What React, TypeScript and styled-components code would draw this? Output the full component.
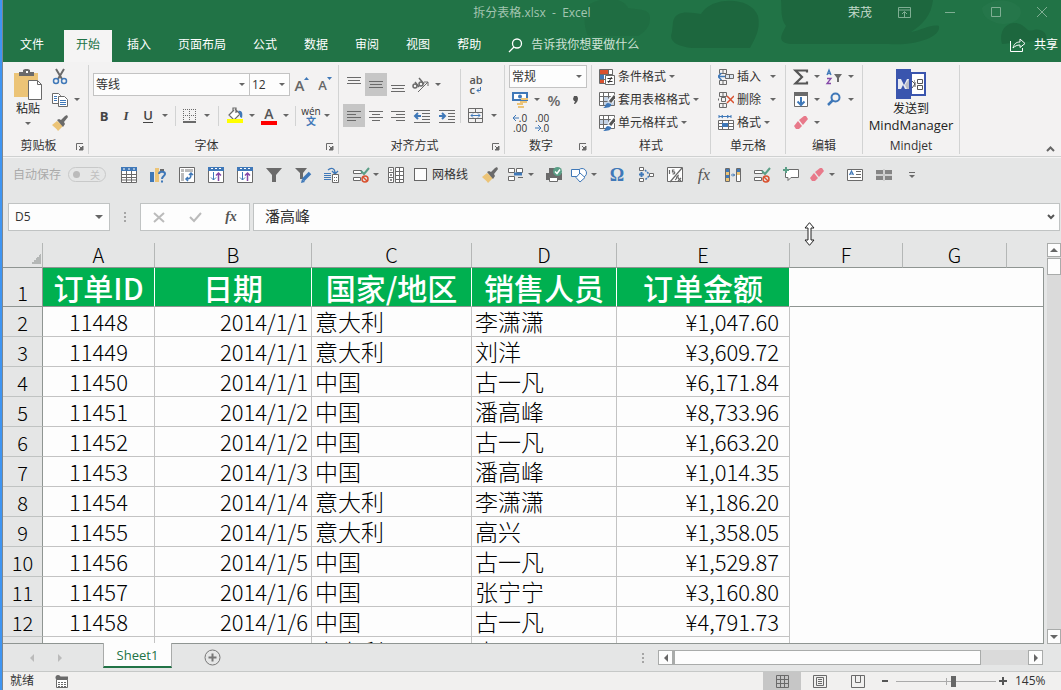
import React from 'react';
import styled, { createGlobalStyle, css } from 'styled-components';

const UI = '"Open Sans", "Noto Sans CJK SC", sans-serif';
const CELL = '"Noto Sans CJK SC", sans-serif';
const GREEN = '#217346';
const GREY = '#6a6a6a';
const BLUE = '#3f78b8';
const PURPLE = '#8548a8';
const TAN = '#ecc477';
const PINK = '#e8798a';
const RED = '#d9512f';

const Global = createGlobalStyle`
  *, *::before, *::after { box-sizing: border-box; }
  body { margin: 0; font: 12px/16px ${UI}; color: #333; }
  button, input, select { font: inherit; color: inherit; margin: 0; }
`;

const Window = styled.div`
  position: relative;
  height: 100vh;
  min-height: 420px;
  display: flex;
  flex-direction: column;
  overflow: hidden;
  padding-left: 1px;
  background: #e5e6e6;
  border-left: 2px solid #3f95f2;
  box-shadow: inset 1px 0 0 #7d8790;
`;

/* ---------- shared controls ---------- */

const bare = css`
  appearance: none;
  border: 0;
  padding: 0;
  background: none;
`;

const Tool = styled.button<{ $w?: number; $on?: boolean; $h?: number }>`
  ${bare}
  flex: none;
  display: flex;
  align-items: center;
  justify-content: center;
  width: ${(p) => p.$w ?? 22}px;
  height: ${(p) => p.$h ?? 23}px;
  background: ${(p) => (p.$on ? '#c6c6c6' : 'transparent')};
  svg { display: block; overflow: visible; }
`;

const CaretSvg = styled.svg`
  flex: none;
  display: block;
  width: 6px;
  height: 3px;
  fill: #666;
`;
const Caret = () => (
  <CaretSvg viewBox="0 0 6 3" aria-hidden="true"><path d="M0 0h6L3 3z" /></CaretSvg>
);

const Drop = ({ w = 12, label }: { w?: number; label: string }) => (
  <Tool $w={w} aria-label={label}><Caret /></Tool>
);

const Field = styled.div<{ $w: number; $join?: boolean }>`
  position: relative;
  flex: none;
  width: ${(p) => p.$w}px;
  height: 23px;
  border: 1px solid #c3c3c3;
  margin-left: ${(p) => (p.$join ? '-1px' : '0')};
  background: #fdfdfd;
  select {
    ${bare}
    width: 100%;
    height: 100%;
    padding-left: 2px;
    outline: 0;
  }
  svg { position: absolute; right: 4px; top: 9px; pointer-events: none; }
`;
const Combo = ({ w, value, label, join }: { w: number; value: string; label: string; join?: boolean }) => (
  <Field $w={w} $join={join}>
    <select aria-label={label} defaultValue={value}><option>{value}</option></select>
    <Caret />
  </Field>
);

/* ---------- icons ---------- */

const Svg = ({ w = 16, h = 16, children }: { w?: number; h?: number; children: React.ReactNode }) => (
  <svg width={w} height={h} viewBox={`0 0 ${w} ${h}`} fill="none" stroke={GREY} aria-hidden="true">{children}</svg>
);

const Lines = ({ xs, ys }: { xs: [number, number][]; ys: number[] }) => (
  <>{ys.map((y, i) => <path key={y} d={`M${xs[i][0]} ${y}.5H${xs[i][1]}`} />)}</>
);

const Brush = () => (
  <Svg>
    <path d="M0 10l5-4 6 5-5 5c-1-2-4-4-6-6z" fill={TAN} stroke="none" />
    <path d="M5 5l2-1 2 1 4-4 2-1 1 2-4 5 1 2-2 3z" fill={GREY} stroke="none" />
  </Svg>
);
const Eraser = () => (
  <Svg>
    <path d="M6 5l5-4h2l2 3-5 6z" fill={PINK} stroke="none" />
    <path d="M5 6l4 5-3 3H3L1 11z" fill={PINK} stroke="none" />
  </Svg>
);
const Sorter = () => (
  <Svg>
    <path d="M.5 1.5h15v14H.5z" fill="#fff" />
    <path d="M0 0h16v4H0z" fill={BLUE} stroke="none" />
    <path d="M3 1.5h2M7 1.5h2M11 1.5h2" stroke="#fff" />
    <path d="M5.500 5v8M3 10.500l2.500 2.500L8 10.500" stroke={BLUE} />
    <path d="M10.500 14V6M8 8.500L10.500 6 13 8.500" stroke={PURPLE} strokeWidth="1.500" />
  </Svg>
);
const Validate = () => (
  <Svg>
    <path d="M.5 3.500h8v3h-8zM.5 10.500h7v3h-7z" fill="#fff" />
    <path d="M8 4l3 3 5-6" stroke="#5a9e86" strokeWidth="2" />
    <circle cx="12" cy="12" r="3" stroke={RED} strokeWidth="1.500" />
    <path d="M10 10l4 4" stroke={RED} strokeWidth="1.500" />
  </Svg>
);
const StyleIcon = ({ filled }: { filled?: boolean }) => (
  <Svg>
    <path d="M.5 .5h15v13H.5z" fill="#fff" />
    <path d={filled ? 'M1 4h11v6H1z' : 'M5 5h10v8H5z'} fill="#c4d3e6" stroke="none" />
    <path d="M.5 4.500h15M.5 9.500h8M4.500 .5v13M9.500 .5v6" />
    <path d="M16 3l-5 7" stroke="#fff" strokeWidth="5" />
    <path d="M16 4l-5 6" stroke="#555" strokeWidth="3" />
    <path d="M4 16c3-1 2-5 5-5l3 1c1 3-3 4-8 4z" fill={BLUE} stroke="none" />
  </Svg>
);
const CellsIcon = ({ kind }: { kind: 'insert' | 'delete' }) => (
  <Svg>
    <path d="M1.500 .5h7v4h-7zM5 .5v4M1.500 11.500h7v4h-7zM5 11.500v4" />
    {kind === 'insert' ? (
      <>
        <path d="M7.500 5.500h8v4h-8zM11.500 5.500v4" fill="#dbe5f1" />
        <path d="M0 7.500h7M3.500 4L0 7.500 3.500 11" stroke={BLUE} strokeWidth="1.500" />
      </>
    ) : (
      <>
        <path d="M.5 8.500v-2M3.500 5.500h4v4h-4z" />
        <path d="M9 4l7 7M16 4l-7 7" stroke={RED} strokeWidth="1.500" />
      </>
    )}
  </Svg>
);

const I = {
  paste: (
    <Svg w={28} h={32}>
      <path d="M0 4h24v24H0z" fill={TAN} stroke="none" />
      <path d="M5 7V3h4V1l2-1h3l2 1v2h4v4z" fill={GREY} stroke="none" />
      <path d="M12 2h2v2h-2z" fill="#fff" stroke="none" />
      <path d="M14.500 11.500h9l4 4v15h-13z" fill="#fff" />
      <path d="M23.500 11.500v4h4" />
    </Svg>
  ),
  cut: (
    <Svg>
      <path d="M4 0l6 10M12 0L6 10" strokeWidth="2" />
      <circle cx="4" cy="12" r="2.500" stroke={BLUE} strokeWidth="1.500" />
      <circle cx="12" cy="12" r="2.500" stroke={BLUE} strokeWidth="1.500" />
    </Svg>
  ),
  copy: (
    <Svg>
      <path d="M.5 1.500h6l2 2v8h-8z" fill="#fff" />
      <path d="M2 4.500h3M2 6.500h3M2 8.500h3" stroke={BLUE} />
      <path d="M6.500 4.500h6l3 3v7h-9z" fill="#fff" />
      <path d="M8 8.500h6M8 10.500h6M8 12.500h6" stroke={BLUE} />
    </Svg>
  ),
  border: (
    <Svg w={14} h={14}>
      <path d="M.5 0v13M6.500 0v13M12.500 0v13M0 .5h13M0 6.500h13" strokeDasharray="1 1" />
      <path d="M0 13h13" strokeWidth="2" />
    </Svg>
  ),
  fill: (
    <Svg w={17} h={17}>
      <path d="M7 3L2 8l5 5 6-6-5-5M6 5V1h3v5" fill="#fff" strokeWidth="1.200" />
      <path d="M11 4c4-1 5 2 4 7l-2-1V7z" fill={BLUE} stroke="none" />
      <path d="M0 12h16v4H0z" fill="#ff0" stroke="none" />
    </Svg>
  ),
  angle: (
    <Svg w={18}>
      <circle cx="3" cy="9" r="2" strokeWidth="1.500" />
      <path d="M3 5l4 5M7 1l5 6" strokeWidth="1.500" />
      <circle cx="9" cy="7" r="2" strokeWidth="1.500" />
      <path d="M6 15L16 5M12 5h4v4" />
    </Svg>
  ),
  outdent: (
    <Svg w={18} h={14}>
      <Lines ys={[1, 4, 7, 10, 13]} xs={[[0, 16], [8, 16], [8, 16], [8, 16], [0, 16]]} />
      <path d="M1 7h6M4 4L1 7l3 3" stroke={BLUE} strokeWidth="2" />
    </Svg>
  ),
  indent: (
    <Svg w={18} h={14}>
      <Lines ys={[1, 4, 7, 10, 13]} xs={[[0, 16], [9, 16], [9, 16], [9, 16], [0, 16]]} />
      <path d="M0 7h6M3 4l3 3-3 3" stroke={BLUE} strokeWidth="2" />
    </Svg>
  ),
  merge: (
    <Svg>
      <path d="M.5 .5h14v14H.5zM.5 4.500h14M.5 10.500h14M7.500 .5v4M7.500 10.500v4" />
      <path d="M3 7.500h9M5 5.500l-2 2 2 2M10 5.500l2 2-2 2" stroke={BLUE} />
    </Svg>
  ),
  money: (
    <Svg w={17}>
      <path d="M1 1h14v7H1z" stroke={BLUE} strokeWidth="2" fill="#fff" />
      <circle cx="8" cy="4.500" r="2" fill={BLUE} stroke="none" />
      <path d="M9 6h7v2H9zM8 9h7v2H8zM5 11h6v2H5zM6 14h6v2H6z" fill={TAN} stroke="none" />
    </Svg>
  ),
  comma: (
    <Svg w={6} h={8}><path d="M1 0h3l1 2c0 3-1 4-3 6H1l1-3H1L0 3z" fill="#555" stroke="none" /></Svg>
  ),
  cond: (
    <Svg>
      <path d="M.5 .5h13v14H.5z" fill="#fff" />
      <path d="M1 1h8v4H1z" fill={RED} stroke="none" />
      <path d="M1 6h4v4H1z" fill={BLUE} stroke="none" />
      <path d="M1 11h4v3H1z" fill={RED} stroke="none" />
      <path d="M.5 5.500h13M.5 10.500h6M9.500 .5v5" />
      <path d="M6.500 6.500h9v9h-9z" fill="#fff" />
      <path d="M8.500 9.500h5M8.500 12.500h5M12.500 8l-3 6" stroke="#333" />
    </Svg>
  ),
  format: (
    <Svg>
      <path d="M1 0v3M13 0v3M1 1.500h12M5 0L3 1.500 5 3M9 0l2 1.500L9 3" stroke={BLUE} />
      <path d="M.5 5.500h15v9H.5zM.5 8.500h15M.5 11.500h15M4.500 5.500v9M10.500 5.500v9" fill="#fff" />
      <path d="M4 8h6v4H4z" fill={BLUE} stroke="none" />
    </Svg>
  ),
  sum: (
    <Svg>
      <path d="M14 3.500V1.500H2.500L9 8l-6.500 6.500H14v-2" strokeWidth="2.200" stroke="#555" />
    </Svg>
  ),
  filldown: (
    <Svg w={14}>
      <path d="M.5 .5h13v14H.5z" fill="#fff" />
      <path d="M0 0h14v4H0z" fill={GREY} stroke="none" />
      <path d="M7 5v8M3.500 9.500L7 13l3.500-3.500" stroke={BLUE} strokeWidth="2" />
    </Svg>
  ),
  find: (
    <Svg>
      <circle cx="9.500" cy="5.500" r="4" stroke={BLUE} strokeWidth="2" />
      <path d="M6.500 8.500L2 13" stroke={BLUE} strokeWidth="2.500" />
    </Svg>
  ),
  sheet: (
    <Svg>
      <path d="M.5 .5h15v15H.5zM.5 7.500h15M.5 10.500h15M.5 13h15M5.500 4v12M10.500 4v12" fill="#fff" />
      <path d="M0 0h16v4H0z" fill={BLUE} stroke="none" />
      <path d="M2 2h2M7 2h2M12 2h2" stroke="#fff" />
    </Svg>
  ),
  chartHelp: (
    <Svg>
      <path d="M0 5h4v10H0z" fill={BLUE} stroke="none" />
      <path d="M5 1h4v14H5z" fill={TAN} stroke="none" />
      <path d="M10 3h4" strokeWidth="2" />
      <path d="M9 7c0-3 6-3 6 0 0 2-3 2-3 5M12 13.500v2" stroke={BLUE} strokeWidth="2" />
    </Svg>
  ),
  pivot: (
    <Svg>
      <path d="M.5 .5h15v15H.5z" fill="#fff" />
      <path d="M2 2h3v3H2zM6 2h8v3H6zM2 6h3v8H2z" fill="#bbb" stroke="none" />
      <path d="M7 12c4 0 5-1 5-5M9 10l-2 2 2 2M10 8l2-2 2 2" stroke={BLUE} strokeWidth="1.500" />
    </Svg>
  ),
  filter: <Svg><path d="M0 1h16l-6 7v7H6V8z" fill={GREY} stroke="none" /></Svg>,
  filterEdit: (
    <Svg>
      <path d="M0 1h12L8 6v6H5V6z" fill={GREY} stroke="none" />
      <path d="M15 6l-7 7" stroke={BLUE} strokeWidth="3.500" />
      <path d="M6 16l1-4 3 3z" fill={BLUE} stroke="none" />
    </Svg>
  ),
  linkCells: (
    <Svg>
      <path d="M4 3c3-3 7-2 7 3M8 4l3 3 3-3" stroke={BLUE} strokeWidth="1.300" />
      <path d="M0 6.500h7M0 8.500h7M0 10.500h7M0 12.500h7" stroke={BLUE} />
      <path d="M8.500 7.500h6v8h-6z" fill="#fff" />
      <path d="M10 10.500h3M10 13.500h3" strokeDasharray="1 1" />
    </Svg>
  ),
  outline: (
    <Svg>
      <path d="M.5 .5h5v5h-5zM.5 5.500h5v5h-5zM.5 10.500h5v5h-5zM7.500 .5h8v15h-8zM7.500 4.500h8M7.500 8.500h8M7.500 12.500h8M11.500 .5v15" fill="#fff" />
      <path d="M2 3h2M2 8h2M3 7v2M2 13h2M3 12v2" />
    </Svg>
  ),
  shapesGroup: (
    <Svg>
      <path d="M.5 1.500h6v4h-6zM8.500 1.500h6v4h-6zM.5 9.500h6v4h-6z" fill="#fff" />
      <path d="M6 7h8" stroke={BLUE} strokeWidth="3" />
      <path d="M10 10.500h5" />
    </Svg>
  ),
  print: (
    <Svg>
      <path d="M3 1h6v5H3zM0 6h16v7H0z" fill={GREY} stroke="none" />
      <path d="M3.500 10.500h8v4h-8z" fill="#fff" />
      <circle cx="11.500" cy="4.500" r="4.500" fill="#5a9e86" stroke="none" />
      <path d="M9 4.500l2 2 3-4" stroke="#fff" strokeWidth="1.500" />
    </Svg>
  ),
  shapes: (
    <Svg>
      <circle cx="11" cy="6" r="4.500" stroke={BLUE} fill="#fff" />
      <path d="M.5 2.500h8v7h-8z" stroke={BLUE} fill="#fff" />
      <path d="M9 6l5 4.500L9 15l-4-4.500z" stroke={BLUE} fill="#fff" />
    </Svg>
  ),
  flow: (
    <Svg>
      <path d="M1.500 .5h4v3h-4zM1.500 11.500h4v3h-4zM11.500 6.500h4v3h-4z" fill="#fff" />
      <path d="M3.500 5v5M1 7.500h5" stroke={BLUE} strokeWidth="2" />
      <path d="M7 3l4 4M11 9l-4 4" stroke={BLUE} strokeDasharray="2 1" strokeWidth="1.500" />
    </Svg>
  ),
  percentBox: (
    <Svg>
      <path d="M.5 .5h15v14H.5z" fill="#fff" />
      <path d="M2.500 3v4M7.500 3h-2v2c3-1 3 2 0 2M15 1L3 15M8 13c3-1 1-5 4-5M9 10h3M11 11l3 3M14 11l-3 3" strokeWidth="1.200" />
    </Svg>
  ),
  splitCols: (
    <Svg>
      <path d="M.5 1.500h4v13h-4zM11.500 1.500h4v13h-4z" fill="#fff" strokeWidth="1" />
      <path d="M1 5h3v3H1zM12 5h3v3h-3z" fill={TAN} stroke="none" />
      <path d="M1 2h3v3H1zM1 8h3v3H1zM12 2h3v3h-3z" fill={BLUE} stroke="none" />
      <path d="M1 11h3v3H1z" fill={TAN} stroke="none" />
      <path d="M6 8h4M8 6.500L9.500 8 8 9.500" stroke={BLUE} />
    </Svg>
  ),
  comment: (
    <Svg>
      <path d="M6 2.500h9.500v8H8l-3 3v-3H2.500V6" fill="#fff" />
      <path d="M0 3h6M3 0v6" stroke="#5a9e86" strokeWidth="2" />
    </Svg>
  ),
  textbox: (
    <Svg>
      <path d="M.5 2.500h15v11H.5z" fill="#fff" />
      <path d="M2.500 8l2-4 2 4M3.500 7h2" stroke={BLUE} strokeWidth="1.200" />
      <path d="M9 4.500h5M9 7.500h5M3 10.500h11" />
    </Svg>
  ),
  freeze: (
    <Svg>
      <path d="M0 3h7v4H0zM9 3h7v4H9zM0 9h7v4H0zM9 9h7v4H9z" fill="#858585" stroke="none" />
      <path d="M0 8h16M8 2v12" stroke="#bbb" />
    </Svg>
  ),
  more: (
    <Svg w={8} h={8}><path d="M0 1.500h6" /><path d="M0 4h6L3 7z" fill={GREY} stroke="none" /></Svg>
  ),
};

const Mindjet = () => (
  <Svg w={30} h={32}>
    <path d="M15 4h14v22H15z" fill="#fff" stroke="#3a55ae" strokeWidth="2" />
    <path d="M0 0h15v30H0z" fill="#3a55ae" stroke="none" />
    <path d="M2 10l5 5-5 5z" fill="#fff" stroke="none" />
    <path d="M2 10v10h3l2-4 2 4h4V10h-2l-3 6-3-6z" fill="#e6e9f2" stroke="none" />
    <path d="M9 16l4-6v10h-2z" fill="#b9bcc6" stroke="none" />
    <path d="M16 12l3 3-3 4M18 12h1M21.500 10.500h5v4h-5zM21.500 16.500h5v4h-5zM19 13v5" stroke="#555" />
  </Svg>
);

/* ---------- title bar and ribbon tabs ---------- */

const Header = styled.header`
  position: relative;
  flex: none;
  background: ${GREEN};
  color: #e9f2ec;
`;
const Pattern = styled.svg`
  position: absolute;
  top: 0;
  right: 0;
  width: 501px;
  height: 48px;
`;
const TitleBar = styled.div`
  position: relative;
  display: grid;
  grid-template-columns: 1fr auto 1fr;
  align-items: center;
  height: 30px;
`;
const Title = styled.h1`
  grid-column: 2;
  margin: 0;
  padding-bottom: 4px;
  font-size: 12px;
  font-weight: 400;
  white-space: pre;
  color: #a3c5b1;
`;
const WindowTools = styled.div`
  display: flex;
  justify-content: flex-end;
  align-items: center;
  gap: 30px;
  padding: 0 11px 5px 0;
  color: #c3dacb;
`;
const User = styled.span`
  margin-right: -6px;
`;
const TabRow = styled.nav`
  position: relative;
  display: flex;
  align-items: center;
  gap: 3px;
  height: 32px;
  padding: 0 3px 0 5px;
`;
const Tab = styled.button<{ $active?: boolean; $first?: boolean }>`
  ${bare}
  height: 32px;
  padding: 0 12px 2px;
  margin-right: ${(p) => (p.$first ? '5px' : '0')};
  background: ${(p) => (p.$active ? '#f5f4f4' : 'transparent')};
  color: ${(p) => (p.$active ? GREEN : '#fff')};
`;
const HeaderLink = styled.button<{ $end?: boolean }>`
  ${bare}
  display: flex;
  align-items: center;
  gap: 8px;
  margin-left: ${(p) => (p.$end ? 'auto' : '12px')};
  padding-bottom: 2px;
  color: ${(p) => (p.$end ? '#fff' : '#cfe2d6')};
`;

/* ---------- ribbon ---------- */

const Ribbon = styled.section`
  position: relative;
  flex: none;
  display: flex;
  height: 95px;
  padding: 3px 0 2px;
  background: #f3f2f2;
  border-bottom: 1px solid #cfd1d1;
`;
const Group = styled.div<{ $w: number; $pad?: number }>`
  flex: none;
  display: flex;
  flex-direction: column;
  justify-content: space-between;
  width: ${(p) => p.$w}px;
  padding-left: ${(p) => p.$pad ?? 5}px;
  border-right: 1px solid #d2d3d3;
`;
const GroupFoot = styled.div<{ $pad?: number }>`
  position: relative;
  margin-left: -${(p) => p.$pad ?? 5}px;
  padding-right: 14px;
  height: 16px;
  text-align: center;
  color: #333;
  button { position: absolute; right: 4px; top: 5px; }
`;
const Plain = styled(GroupFoot)`
  padding-right: 0;
`;
const Row = styled.div<{ $top?: boolean; $indent?: boolean }>`
  display: flex;
  align-items: ${(p) => (p.$top ? 'flex-start' : 'center')};
  padding-left: ${(p) => (p.$indent ? '15px' : '0')};
`;
const TwoRows = styled.div`
  display: flex;
  flex-direction: column;
  gap: 8px;
  padding-top: 8px;
`;
const ThreeRows = styled.div`
  display: grid;
  grid-template-rows: repeat(3, 23px);
`;
const Sep = styled.i<{ $h?: number; $m?: number }>`
  flex: none;
  width: 1px;
  height: ${(p) => p.$h ?? 20}px;
  margin: 0 ${(p) => p.$m ?? 4}px;
  background: #d2d3d3;
`;
const Big = styled.button<{ $w: number }>`
  ${bare}
  flex: none;
  display: flex;
  flex-direction: column;
  align-items: center;
  width: ${(p) => p.$w}px;
  padding-top: 4px;
  color: #222;
  span + svg { margin-top: 5px; }
`;
const BigText = styled.span<{ $size?: number }>`
  font-size: ${(p) => p.$size ?? 12}px;
  line-height: 16px;
`;
const Letter = styled.span<{ $kind?: 'b' | 'i' | 'u' }>`
  font-size: 13px;
  line-height: 14px;
  color: #444;
  font-weight: ${(p) => (p.$kind === 'b' ? 700 : 600)};
  font-style: ${(p) => (p.$kind === 'i' ? 'italic' : 'normal')};
  font-family: ${(p) => (p.$kind === 'i' ? '"Liberation Serif", serif' : UI)};
  border-bottom: ${(p) => (p.$kind === 'u' ? '1px solid #444' : '0')};
`;
const SizeLetter = styled.span<{ $big?: boolean }>`
  display: flex;
  align-items: flex-start;
  font-size: ${(p) => (p.$big ? 15 : 13)}px;
  line-height: 20px;
  font-weight: 600;
  color: #666;
  svg { margin-top: 2px; }
`;
const ColorLetter = styled.span`
  width: 16px;
  border-bottom: 4px solid #f00;
  font-size: 14px;
  line-height: 14px;
  font-weight: 600;
  text-align: center;
  color: #555;
`;
const Phonetic = styled.span`
  display: flex;
  flex-direction: column;
  align-items: center;
  font-size: 10px;
  line-height: 10px;
  color: #333;
  b { font-weight: 700; color: ${BLUE}; }
`;
const WrapText = styled.span`
  display: grid;
  font-size: 11px;
  line-height: 10px;
  font-weight: 600;
  color: #555;
  text-align: left;
  span { display: flex; align-items: center; gap: 1px; }
`;
const Decimals = styled.span`
  display: flex;
  flex-direction: column;
  align-items: flex-end;
  font-size: 10px;
  line-height: 10px;
  color: #333;
  span { display: flex; align-items: center; }
`;
const Sign = styled.span`
  font-size: 15px;
  line-height: 20px;
  font-weight: 600;
  color: #666;
`;
const Labelled = styled.button<{ $gap?: number }>`
  ${bare}
  display: flex;
  align-items: center;
  gap: 3px;
  height: 23px;
  color: #333;
  white-space: nowrap;
  > svg:last-child { margin-left: ${(p) => p.$gap ?? 0}px; }
`;
const Collapse = styled(Tool)`
  position: absolute;
  right: 2px;
  bottom: 0;
`;

const LauncherIcon = () => (
  <Svg w={8} h={8}><path d="M.5 7V.5H7M3 3l3 3" /><path d="M7 3v4H3z" fill={GREY} /></Svg>
);
const Foot = ({ text, pad, launcher }: { text: string; pad?: number; launcher?: boolean }) =>
  launcher ? (
    <GroupFoot $pad={pad}>{text}<Tool $w={8} $h={8} aria-label={`${text}设置`}><LauncherIcon /></Tool></GroupFoot>
  ) : (
    <Plain $pad={pad}>{text}</Plain>
  );

const AlignIcon = ({ at, side }: { at?: 'top' | 'mid' | 'bot'; side?: 'l' | 'c' | 'r' }) => {
  if (at) {
    const y = { top: 0, mid: 4, bot: 8 }[at];
    return <Svg w={14}><Lines ys={[y, y + 3, y + 6]} xs={[[0, 14], [1, 13], [0, 14]]} /></Svg>;
  }
  const s: [number, number] = side === 'l' ? [0, 9] : side === 'c' ? [3, 11] : [5, 14];
  return <Svg w={14} h={12}><Lines ys={[1, 4, 7, 10]} xs={[[0, 14], s, [0, 14], s]} /></Svg>;
};

/* ---------- quick access bar ---------- */

const Quick = styled.div`
  flex: none;
  display: flex;
  align-items: center;
  height: 36px;
  padding: 0 0 2px 10px;
  border-top: 1px solid #f4f4f4;
`;
const AutoSave = styled.label`
  display: flex;
  align-items: center;
  gap: 7px;
  width: 102px;
  color: #aaa;
`;
const Switch = styled.span`
  position: relative;
  display: flex;
  align-items: center;
  justify-content: flex-end;
  width: 38px;
  height: 15px;
  padding-right: 5px;
  border: 1px solid #c8c9c9;
  border-radius: 8px;
  font-size: 10px;
  color: #c0c0c0;
  input {
    appearance: none;
    position: absolute;
    left: 4px;
    top: 3px;
    width: 7px;
    height: 7px;
    margin: 0;
    border-radius: 50%;
    background: #bbb;
  }
`;
const QItem = styled.button<{ $w?: number }>`
  ${bare}
  flex: none;
  display: flex;
  align-items: center;
  gap: 4px;
  width: ${(p) => p.$w ?? 29}px;
  height: 24px;
  padding-left: 6px;
  svg { display: block; overflow: visible; }
`;
const Check = styled.label`
  display: flex;
  align-items: center;
  gap: 5px;
  width: 62px;
  margin-left: 3px;
  white-space: nowrap;
  input {
    appearance: none;
    width: 13px;
    height: 13px;
    border: 1px solid #666;
    background: #fdfdfd;
  }
`;
const Omega = styled.span`
  width: 16px;
  font: 700 18px/20px "Liberation Serif", serif;
  color: ${BLUE};
  text-align: center;
`;
const Fx = styled.span<{ $big?: boolean }>`
  width: 16px;
  font: italic ${(p) => (p.$big ? '400 17px' : '700 14px')}/20px "Liberation Serif", serif;
  color: #555;
  text-align: center;
`;

/* ---------- formula bar ---------- */

const FormulaBar = styled.div`
  flex: none;
  display: flex;
  height: 28px;
  margin: 10px 1px 12px 5px;
`;
const Box = styled.div<{ $w?: number }>`
  flex: ${(p) => (p.$w ? 'none' : '1')};
  width: ${(p) => (p.$w ? `${p.$w}px` : 'auto')};
  min-width: 0;
  display: flex;
  align-items: center;
  border: 1px solid #c0c3c3;
  background: #fdfdfd;
`;
const NameInput = styled.input`
  ${bare}
  flex: 1;
  min-width: 0;
  padding-left: 6px;
  outline: 0;
`;
const FormulaInput = styled(NameInput)`
  padding: 0 0 2px 11px;
  font-size: 15px;
  line-height: 20px;
`;
const Dots = styled.svg`
  flex: none;
  width: 30px;
  height: 28px;
  fill: #a5a5a5;
`;
const FxBox = styled(Box)`
  justify-content: space-around;
  padding: 0;
  margin-right: 3px;
`;

/* ---------- worksheet ---------- */

const Work = styled.div`
  flex: 1;
  min-height: 0;
  display: flex;
  gap: 3px;
`;
const Sheet = styled.div`
  flex: 1;
  min-width: 0;
  overflow: hidden;
  border-bottom: 1px solid #8f9592;
`;
const Grid = styled.table`
  width: 100%;
  table-layout: fixed;
  border-collapse: separate;
  border-spacing: 0;
  font: 300 22px/29px ${CELL};
  color: #000;
  td, th { padding: 0; height: 30px; white-space: nowrap; }
  th { font-weight: 300; }
`;
const Col = styled.col<{ $w?: number }>`
  width: ${(p) => (p.$w ? `${p.$w}px` : 'auto')};
`;
const ColHead = styled.th<{ $end?: boolean }>`
  && { height: 25px; }
  font-size: 20px;
  line-height: 24px;
  border-bottom: 1px solid #8f9592;
  border-right: 1px solid ${(p) => (p.$end ? 'transparent' : '#b4b7b6')};
`;
const Corner = styled(ColHead)`
  background: linear-gradient(135deg, transparent 50%, #b4b7b6 50%) no-repeat right 1px bottom 3px / 10px 10px;
`;
const RowHead = styled.th<{ $top?: boolean }>`
  font-size: 20px;
  line-height: 27px;
  vertical-align: bottom;
  border-right: 1px solid #8f9592;
  border-bottom: 1px solid ${(p) => (p.$top ? '#8f9592' : '#c0c3c2')};
`;
const HeadCell = styled.td`
  && { height: 39px; }
  font-size: 30px;
  line-height: 38px;
  font-weight: 500;
  text-align: center;
  color: #fff;
  background: #00b050;
  border-right: 1px solid #fff;
  border-bottom: 1px solid #8f9592;
`;
const Cell = styled.td<{ $align: 'left' | 'center' | 'right'; $pad?: number }>`
  && { padding: 0 ${(p) => p.$pad ?? 3}px; }
  font-size: ${(p) => (p.$align === 'left' ? 23 : 22)}px;
  text-align: ${(p) => p.$align};
  background: #fdfdfd;
  border-right: 1px solid #c3c3c3;
  border-bottom: 1px solid #c3c3c3;
`;
const Blank = styled.td<{ $top?: boolean }>`
  background: #fdfdfd;
  border-right: 1px solid #8f9592;
  border-bottom: ${(p) => (p.$top ? '1px solid #8f9592' : '0')};
`;
const VScroll = styled.div`
  flex: none;
  display: flex;
  flex-direction: column;
  gap: 1px;
  width: 14px;
  background: #dadada;
`;
const ScrollPart = styled.button<{ $w?: number; $h?: number }>`
  ${bare}
  flex: none;
  display: flex;
  align-items: center;
  justify-content: center;
  width: ${(p) => (p.$w ? `${p.$w}px` : 'auto')};
  height: ${(p) => (p.$h ? `${p.$h}px` : 'auto')};
  border: 1px solid #a9abaa;
  background: #fdfdfd;
`;
const Fill = styled.div`
  flex: 1;
`;

const Arrow = ({ d, color = '#666' }: { d: string; color?: string }) => (
  <svg width="8" height="8" viewBox="0 0 8 8" fill={color} aria-hidden="true"><path d={d} /></svg>
);
const UP = 'M0 6h8L4 2z';
const DOWN = 'M0 2h8L4 6z';
const LEFT = 'M6 0v8L2 4z';
const RIGHT = 'M2 0v8l4-4z';

/* ---------- sheet tabs and status bar ---------- */

const SheetBar = styled.div`
  flex: none;
  display: flex;
  align-items: center;
  height: 27px;
  padding-right: 18px;
`;
const SheetTab = styled.button`
  ${bare}
  align-self: flex-start;
  width: 69px;
  height: 25px;
  margin: -1px 32px 0 29px;
  border: 1px solid #a9abaa;
  border-top: 0;
  border-bottom: 2px solid ${GREEN};
  background: #fdfdfd;
  color: ${GREEN};
  font-size: 13px;
  line-height: 20px;
`;
const HScroll = styled.div`
  display: flex;
  width: 37%;
  height: 15px;
  background: #dadada;
`;
const Thumb = styled(ScrollPart)`
  flex: 1;
  margin-right: 47px;
  border-left-width: 2px;
`;
const Status = styled.footer`
  flex: none;
  display: flex;
  align-items: center;
  height: 19px;
  padding-left: 7px;
  border-top: 1px solid #c6c8c7;
  background: #f1f0ef;
`;
const Zoom = styled.input`
  appearance: none;
  width: 100px;
  height: 12px;
  margin: 0 3px;
  background:
    linear-gradient(#aaa, #aaa) no-repeat center / 1px 7px,
    linear-gradient(#aaa, #aaa) no-repeat center / 100% 1px;
  &::-webkit-slider-thumb {
    appearance: none;
    width: 5px;
    height: 11px;
    background: #666;
  }
`;
const Percent = styled.span`
  width: 54px;
  padding-left: 8px;
`;
const Pointer = styled.svg`
  position: absolute;
  left: 802px;
  top: 222px;
  width: 11px;
  height: 24px;
`;

/* ---------- data ---------- */

const tabs = ['文件', '开始', '插入', '页面布局', '公式', '数据', '审阅', '视图', '帮助'];

const rows: [string, string, string, string, string][] = [
  ['11448', '2014/1/1', '意大利', '李潇潇', '¥1,047.60'],
  ['11449', '2014/1/1', '意大利', '刘洋', '¥3,609.72'],
  ['11450', '2014/1/1', '中国', '古一凡', '¥6,171.84'],
  ['11451', '2014/1/2', '中国', '潘高峰', '¥8,733.96'],
  ['11452', '2014/1/2', '中国', '古一凡', '¥1,663.20'],
  ['11453', '2014/1/3', '中国', '潘高峰', '¥1,014.35'],
  ['11454', '2014/1/4', '意大利', '李潇潇', '¥1,186.20'],
  ['11455', '2014/1/5', '意大利', '高兴', '¥1,358.05'],
  ['11456', '2014/1/5', '中国', '古一凡', '¥1,529.87'],
  ['11457', '2014/1/6', '中国', '张宁宁', '¥3,160.80'],
  ['11458', '2014/1/6', '中国', '古一凡', '¥4,791.73'],
  ['11459', '2014/1/7', '意大利', '古一凡', '¥2,284.10'],
];

const quickA: [string, React.ReactNode][] = [
  ['工作表', I.sheet], ['推荐图表', I.chartHelp], ['数据透视表', I.pivot], ['升序', <Sorter />],
  ['降序', <Sorter />], ['筛选', I.filter], ['高级筛选', I.filterEdit], ['选择性粘贴', I.linkCells],
];
const quickB: [string, React.ReactNode, number, boolean][] = [
  ['格式刷', <Brush />, 26, false], ['对齐', I.shapesGroup, 38, true], ['打印预览', I.print, 25, false],
  ['形状', I.shapes, 38, true], ['符号', <Omega>Ω</Omega>, 29, false], ['流程', I.flow, 29, false],
  ['公式求值', I.percentBox, 29, false], ['插入函数', <Fx $big>fx</Fx>, 29, false],
  ['分列', I.splitCols, 29, false], ['数据验证', <Validate />, 29, false], ['批注', I.comment, 26, false],
  ['清除', <Eraser />, 38, true], ['文本框', I.textbox, 29, false], ['冻结窗格', I.freeze, 33, false],
  ['自定义快速访问工具栏', I.more, 20, false],
];

export default function App() {
  return (
    <>
      <Global />
      <Window>
        <Header>
          <Pattern viewBox="0 0 501 48" fill="#1d673e" aria-hidden="true">
            <path opacity=".5" d="M30 4c14-8 34-6 38 4 10 2 22 0 22 10s-6 14-12 18H28c-4-10-6-22 2-32z" />
            <path d="M113 22c2-12 16-10 28-8 10-18 50-18 57 2 3 14-4 24-8 32h-58c-14-2-24-6-20-16z" />
            <path d="M221 0h152c-2 16-10 24-22 32 12-2 20-8 28-6 2 12-26 20-50 18H230c-14-2-8-10-4-18-6-8-4-18-5-26z" />
            <path d="M442 44c-4-14 6-24 18-20 8 4 6 8 14 6s14 4 12 10z" />
            <path d="M422 8c8-10 30-10 38 0 4 10-6 16-16 16s-22-6-22-16z" fill="#2a7a4e" opacity=".5" />
          </Pattern>
          <TitleBar>
            <Title>{'拆分表格.xlsx  -  Excel'}</Title>
            <WindowTools>
              <User>荣茂</User>
              <Tool $w={16} $h={16} aria-label="功能区显示选项">
                <svg width="13" height="11" viewBox="0 0 13 11" fill="none" stroke="#7fae93"><path d="M.5 .5h12v10H.5zM.5 3h12M6.500 10V5M4 7l2.500-2.500L9 7" /></svg>
              </Tool>
              <Tool $w={16} $h={16} aria-label="最小化">
                <svg width="11" height="11" viewBox="0 0 11 11" stroke="#7fae93"><path d="M0 5.500h10" /></svg>
              </Tool>
              <Tool $w={16} $h={16} aria-label="最大化">
                <svg width="11" height="11" viewBox="0 0 11 11" fill="none" stroke="#7fae93"><path d="M.5 .5h9v9h-9z" /></svg>
              </Tool>
              <Tool $w={16} $h={16} aria-label="关闭">
                <svg width="11" height="11" viewBox="0 0 11 11" stroke="#7fae93"><path d="M0 0l10 10M10 0L0 10" /></svg>
              </Tool>
            </WindowTools>
          </TitleBar>
          <TabRow>
            {tabs.map((t, i) => <Tab key={t} $first={i === 0} $active={i === 1}>{t}</Tab>)}
            <HeaderLink>
              <svg width="15" height="15" viewBox="0 0 15 15" fill="none" stroke="#fff" strokeWidth="1.300"><circle cx="9" cy="5.500" r="4.500" /><path d="M6 9l-5 5" /></svg>
              告诉我你想要做什么
            </HeaderLink>
            <HeaderLink $end>
              <svg width="16" height="14" viewBox="0 0 16 14" fill="none" stroke="#fff"><path d="M.5 3v10.500h12V10M3 10c1-4 3-6 7-6V1l5 4.500-5 4V7C7 7 5 8 3 10z" /></svg>
              共享
            </HeaderLink>
          </TabRow>
        </Header>

        <Ribbon>
          <Group $w={86} $pad={5}>
            <Row $top>
              <Big $w={40}>{I.paste}<BigText>粘贴</BigText><Caret /></Big>
              <ThreeRows>
                <Row><Tool $w={24} aria-label="剪切">{I.cut}</Tool></Row>
                <Row><Tool $w={24} aria-label="复制">{I.copy}</Tool><Drop w={10} label="复制选项" /></Row>
                <Row><Tool $w={24} aria-label="格式刷"><Brush /></Tool></Row>
              </ThreeRows>
            </Row>
            <Foot text="剪贴板" launcher />
          </Group>

          <Group $w={250} $pad={4}>
            <TwoRows>
              <Row>
                <Combo w={157} value="等线" label="字体" />
                <Combo w={41} value="12" label="字号" join />
                <Tool $w={24} aria-label="增大字号">
                  <SizeLetter $big>A<svg width="5" height="3" viewBox="0 0 5 3" fill={BLUE}><path d="M0 3h5L2.500 0z" /></svg></SizeLetter>
                </Tool>
                <Tool $w={22} aria-label="减小字号">
                  <SizeLetter>A<svg width="5" height="3" viewBox="0 0 5 3" fill={BLUE}><path d="M0 0h5L2.500 3z" /></svg></SizeLetter>
                </Tool>
              </Row>
              <Row>
                <Tool aria-label="加粗"><Letter $kind="b">B</Letter></Tool>
                <Tool aria-label="倾斜"><Letter $kind="i">I</Letter></Tool>
                <Tool aria-label="下划线"><Letter $kind="u">U</Letter></Tool>
                <Drop label="下划线选项" />
                <Sep />
                <Tool $w={20} aria-label="边框">{I.border}</Tool>
                <Drop label="边框选项" w={14} />
                <Sep />
                <Tool $w={24} aria-label="填充颜色">{I.fill}</Tool>
                <Drop label="填充选项" w={10} />
                <Tool $w={24} aria-label="字体颜色"><ColorLetter>A</ColorLetter></Tool>
                <Drop label="字体颜色选项" w={10} />
                <Sep />
                <Tool $w={22} aria-label="拼音"><Phonetic>wén<b>文</b></Phonetic></Tool>
                <Drop label="拼音选项" w={10} />
              </Row>
            </TwoRows>
            <Foot text="字体" pad={4} launcher />
          </Group>

          <Group $w={166} $pad={4}>
            <Row>
              <TwoRows>
                <Row>
                  <Tool aria-label="顶端对齐"><AlignIcon at="top" /></Tool>
                  <Tool $on aria-label="垂直居中"><AlignIcon at="mid" /></Tool>
                  <Tool aria-label="底端对齐"><AlignIcon at="bot" /></Tool>
                  <Tool $w={24} aria-label="方向">{I.angle}</Tool>
                  <Drop label="方向选项" w={10} />
                </Row>
                <Row>
                  <Tool $on aria-label="左对齐"><AlignIcon side="l" /></Tool>
                  <Tool aria-label="居中"><AlignIcon side="c" /></Tool>
                  <Tool aria-label="右对齐"><AlignIcon side="r" /></Tool>
                  <Tool $w={28} aria-label="减少缩进量">{I.outdent}</Tool>
                  <Tool aria-label="增加缩进量">{I.indent}</Tool>
                </Row>
              </TwoRows>
              <Sep $h={54} $m={1} />
              <TwoRows>
                <Tool $w={28} aria-label="自动换行">
                  <WrapText>ab<span>c<svg width="5" height="6" viewBox="0 0 5 6" fill="none" stroke={BLUE}><path d="M4.500 0v3.500H1M3 1.500l-2 2 2 2" /></svg></span></WrapText>
                </Tool>
                <Row>
                  <Tool $w={28} aria-label="合并后居中">{I.merge}</Tool>
                  <Drop label="合并选项" w={8} />
                </Row>
              </TwoRows>
            </Row>
            <Foot text="对齐方式" pad={4} launcher />
          </Group>

          <Group $w={87} $pad={4}>
            <ThreeRows>
              <Combo w={78} value="常规" label="数字格式" />
              <Row>
                <Tool aria-label="会计数字格式">{I.money}</Tool>
                <Drop label="会计选项" />
                <Tool aria-label="百分比"><Sign>%</Sign></Tool>
                <Tool aria-label="千位分隔">{I.comma}</Tool>
              </Row>
              <Row>
                <Tool aria-label="增加小数位数">
                  <Decimals><span><svg width="6" height="6" viewBox="0 0 6 6" stroke={BLUE} fill="none"><path d="M0 3h6M3 0L0 3l3 3" /></svg>.0</span><span>.00</span></Decimals>
                </Tool>
                <Tool aria-label="减少小数位数">
                  <Decimals><span>.00</span><span><svg width="6" height="6" viewBox="0 0 6 6" stroke={BLUE} fill="none"><path d="M0 3h6M3 0l3 3-3 3" /></svg>.0</span></Decimals>
                </Tool>
              </Row>
            </ThreeRows>
            <Foot text="数字" pad={4} launcher />
          </Group>

          <Group $w={119} $pad={7}>
            <ThreeRows>
              <Labelled>{I.cond}条件格式<Caret /></Labelled>
              <Labelled><StyleIcon />套用表格格式<Caret /></Labelled>
              <Labelled><StyleIcon filled />单元格样式<Caret /></Labelled>
            </ThreeRows>
            <Foot text="样式" pad={7} />
          </Group>

          <Group $w={75} $pad={7}>
            <ThreeRows>
              <Labelled $gap={6}><CellsIcon kind="insert" />插入<Caret /></Labelled>
              <Labelled $gap={6}><CellsIcon kind="delete" />删除<Caret /></Labelled>
              <Labelled>{I.format}格式<Caret /></Labelled>
            </ThreeRows>
            <Foot text="单元格" pad={7} />
          </Group>

          <Group $w={77} $pad={4}>
            <ThreeRows>
              <Row>
                <Tool aria-label="自动求和">{I.sum}</Tool><Drop w={10} label="求和选项" />
                <Tool $w={24} aria-label="排序和筛选">
                  <Svg w={18}>
                    <path d="M2 6l2-5 2 5M3 4.500h2" stroke={BLUE} strokeWidth="1.300" />
                    <path d="M2 9.500h4l-4 5h4" stroke={PURPLE} strokeWidth="1.300" />
                    <path d="M9 5h8l-3 4v4h-2V9z" fill={GREY} stroke="none" />
                  </Svg>
                </Tool>
                <Drop label="排序选项" w={10} />
              </Row>
              <Row>
                <Tool aria-label="填充">{I.filldown}</Tool><Drop label="填充方式" w={10} />
                <Tool $w={24} aria-label="查找和选择">{I.find}</Tool><Drop label="查找选项" w={10} />
              </Row>
              <Row><Tool aria-label="清除"><Eraser /></Tool><Drop label="清除选项" w={10} /></Row>
            </ThreeRows>
            <Foot text="编辑" pad={4} />
          </Group>

          <Group $w={97} $pad={1}>
            <Big $w={94}>
              <Mindjet />
              <BigText>发送到</BigText>
              <BigText $size={13}>MindManager</BigText>
            </Big>
            <Foot text="Mindjet" pad={1} />
          </Group>
          <Collapse $w={18} $h={14} aria-label="折叠功能区">
            <svg width="9" height="6" viewBox="0 0 9 6" fill="none" stroke="#666" strokeWidth="2"><path d="M1 5l3.500-3.500L8 5" /></svg>
          </Collapse>
        </Ribbon>

        <Quick>
          <AutoSave>自动保存<Switch><input type="checkbox" />关</Switch></AutoSave>
          {quickA.map(([label, icon]) => <QItem key={label} aria-label={label}>{icon}</QItem>)}
          <QItem $w={35} aria-label="数据验证选项"><Validate /><Caret /></QItem>
          <QItem aria-label="分级显示">{I.outline}</QItem>
          <Check><input type="checkbox" />网格线</Check>
          {quickB.map(([label, icon, w, split]) => (
            <QItem key={label} $w={w} aria-label={label}>{icon}{split && <Caret />}</QItem>
          ))}
        </Quick>

        <FormulaBar>
          <Box $w={102}>
            <NameInput aria-label="名称框" defaultValue="D5" />
            <Tool $w={20} aria-label="名称列表"><Arrow d={DOWN} /></Tool>
          </Box>
          <Dots viewBox="0 0 30 28" aria-hidden="true"><path d="M14 9h2v2h-2zM14 13h2v2h-2zM14 17h2v2h-2z" /></Dots>
          <FxBox $w={110}>
            <Tool aria-label="取消"><svg width="12" height="11" viewBox="0 0 12 11" stroke="#bbb" strokeWidth="2"><path d="M1 1l10 9M11 1L1 10" /></svg></Tool>
            <Tool aria-label="输入"><svg width="13" height="10" viewBox="0 0 13 10" fill="none" stroke="#bbb" strokeWidth="2"><path d="M1 5l4 4 7-8" /></svg></Tool>
            <Tool aria-label="插入函数"><Fx>fx</Fx></Tool>
          </FxBox>
          <Box>
            <FormulaInput aria-label="编辑栏" defaultValue="潘高峰" />
            <Tool $w={16} aria-label="展开编辑栏"><svg width="8" height="6" viewBox="0 0 8 6" fill="none" stroke="#555" strokeWidth="2"><path d="M1 1l3 3 3-3" /></svg></Tool>
          </Box>
        </FormulaBar>

        <Work>
          <Sheet>
            <Grid>
              <colgroup>
                {[40, 112, 157, 160, 145, 173, 113, 104].map((w, i) => <Col key={i} $w={w} />)}
                <Col />
              </colgroup>
              <thead>
                <tr>
                  <Corner aria-label="全选" />
                  {['A', 'B', 'C', 'D', 'E', 'F', 'G'].map((c) => <ColHead key={c} scope="col">{c}</ColHead>)}
                  <ColHead $end aria-label="H" />
                </tr>
              </thead>
              <tbody>
                <tr>
                  <RowHead $top scope="row">1</RowHead>
                  {['订单ID', '日期', '国家/地区', '销售人员', '订单金额'].map((h) => <HeadCell key={h}>{h}</HeadCell>)}
                  <Blank $top colSpan={3} />
                </tr>
                {rows.map((r, i) => (
                  <tr key={r[0]}>
                    <RowHead scope="row">{i + 2}</RowHead>
                    <Cell $align="center">{r[0]}</Cell>
                    <Cell $align="right">{r[1]}</Cell>
                    <Cell $align="left">{r[2]}</Cell>
                    <Cell $align="left">{r[3]}</Cell>
                    <Cell $align="right" $pad={10}>{r[4]}</Cell>
                    <Blank colSpan={3} />
                  </tr>
                ))}
              </tbody>
            </Grid>
          </Sheet>
          <VScroll>
            <ScrollPart $h={14} aria-label="向上滚动"><Arrow d={UP} /></ScrollPart>
            <ScrollPart $h={17} aria-label="垂直滚动块" />
            <Fill />
            <ScrollPart $h={15} aria-label="向下滚动"><Arrow d={DOWN} /></ScrollPart>
          </VScroll>
        </Work>

        <SheetBar>
          <Row $indent>
            <Tool $w={28} aria-label="上一张工作表"><Arrow d={LEFT} color="#bbb" /></Tool>
            <Tool $w={28} aria-label="下一张工作表"><Arrow d={RIGHT} color="#bbb" /></Tool>
          </Row>
          <SheetTab>Sheet1</SheetTab>
          <Tool $w={17} aria-label="新工作表">
            <svg width="17" height="17" viewBox="0 0 17 17" fill="none" stroke="#777"><circle cx="8.500" cy="8.500" r="7.500" /><path d="M4.500 8.500h8M8.500 4.500v8" strokeWidth="2" /></svg>
          </Tool>
          <Fill />
          <Dots viewBox="0 0 30 28" aria-hidden="true"><path d="M14 9h2v2h-2zM14 13h2v2h-2zM14 17h2v2h-2z" /></Dots>
          <HScroll>
            <ScrollPart $w={15} $h={15} aria-label="向左滚动"><Arrow d={LEFT} /></ScrollPart>
            <Thumb $h={15} aria-label="水平滚动块" />
            <ScrollPart $w={15} $h={15} aria-label="向右滚动"><Arrow d={RIGHT} /></ScrollPart>
          </HScroll>
        </SheetBar>

        <Status>
          <span>就绪</span>
          <Tool $w={54} $h={18} aria-label="录制宏">
            <Svg w={13} h={13}>
              <path d="M1.500 4.500h11v8h-11z" fill="#fff" />
              <path d="M5 3h8" strokeWidth="3" />
              <path d="M3 7.500h8M3 9.500h8M3 11.500h8" strokeDasharray="2 1" />
              <circle cx="3" cy="2.500" r="2.500" fill={GREY} stroke="none" />
            </Svg>
          </Tool>
          <Fill />
          <Tool $w={38} $h={18} $on aria-label="普通">
            <Svg w={13} h={13}><path d="M.5 .5h12v12H.5zM.5 4.500h12M.5 8.500h12M4.500 .5v12M8.500 .5v12" /></Svg>
          </Tool>
          <Tool $w={38} $h={18} aria-label="页面布局">
            <Svg w={14} h={13}><path d="M.5 .5h13v12H.5zM3.500 2.500h7v8h-7zM5 4.500h4M5 6.500h4M5 8.500h4" /></Svg>
          </Tool>
          <Tool $w={38} $h={18} aria-label="分页预览">
            <Svg w={14} h={13}><path d="M.5 .5h13v12H.5zM4.500 .5v7h5v-7" /></Svg>
          </Tool>
          <Tool $w={16} $h={18} aria-label="缩小"><svg width="6" height="6" viewBox="0 0 6 6" stroke="#555" strokeWidth="2"><path d="M0 3h6" /></svg></Tool>
          <Zoom type="range" min={0} max={100} defaultValue={58} aria-label="缩放" />
          <Tool $w={8} $h={18} aria-label="放大"><svg width="8" height="8" viewBox="0 0 8 8" stroke="#555" strokeWidth="2"><path d="M0 4h8M4 0v8" /></svg></Tool>
          <Percent>145%</Percent>
        </Status>

        <Pointer viewBox="0 0 11 24" fill="#fff" stroke="#222" aria-hidden="true">
          <path d="M5.500 .7L10 6H7v12h3l-4.500 5.300L1 18h3V6H1z" />
        </Pointer>
      </Window>
    </>
  );
}
